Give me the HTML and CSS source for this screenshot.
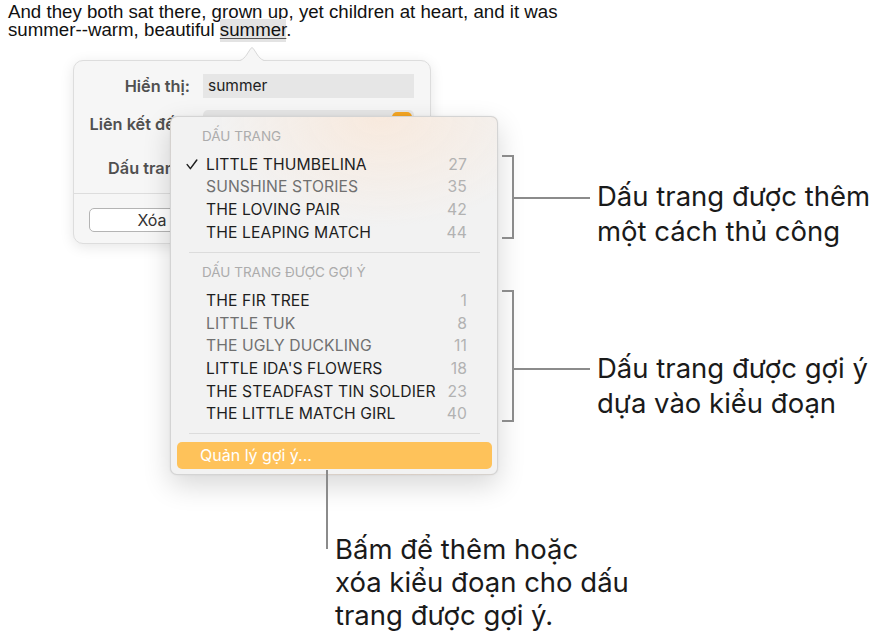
FILE: index.html
```html
<!DOCTYPE html>
<html lang="vi">
<head>
<meta charset="utf-8">
<title>Dấu trang</title>
<link rel="stylesheet" href="styles.css">
</head>
<body>
<div class="stage">
  <div class="doc">
    <div class="line">And they both sat there, grown up, yet children at heart, and it was</div>
    <div class="line"><span>summer--warm, beautiful</span> <span class="hl">summer</span><span>.</span></div>
  </div>

  <div class="popover">
    <svg class="arrow" width="40" height="19" viewBox="0 0 40 19"><path d="M0 18.5 C8 18.5 11 17 14.5 12 L18.6 5.6 Q20 3.6 21.4 5.6 L25.5 12 C29 17 32 18.5 40 18.5" fill="#f6f6f6" stroke="#d8d8d8" stroke-width="1"/><rect x="0" y="18" width="40" height="1.5" fill="#f6f6f6"/></svg>
    <div class="form">
      <div class="row row1"><span class="label">Hiển thị:</span><span class="field">summer</span></div>
      <div class="row row2"><span class="label">Liên kết đến:</span><span class="field popup"><span class="knob"></span></span></div>
      <div class="row row3"><span class="label">Dấu trang:</span><span class="field popup"></span></div>
    </div>
    <div class="sep"></div>
    <div class="foot"><span class="btn">Xóa</span></div>
  </div>

  <div class="menu">
    <div class="menu-head">DẤU TRANG</div>
    <ul class="menu-list">
      <li class="item"><span class="chk"><svg width="12" height="11" viewBox="0 0 12 11"><path d="M1.2 5.6 L4.4 9.6 L10.8 1" fill="none" stroke="#1e1e1e" stroke-width="1.5" stroke-linecap="round" stroke-linejoin="round"/></svg></span><span class="name">LITTLE THUMBELINA</span><span class="num">27</span></li>
      <li class="item dim"><span class="chk"></span><span class="name">SUNSHINE STORIES</span><span class="num">35</span></li>
      <li class="item"><span class="chk"></span><span class="name">THE LOVING PAIR</span><span class="num">42</span></li>
      <li class="item"><span class="chk"></span><span class="name">THE LEAPING MATCH</span><span class="num">44</span></li>
    </ul>
    <div class="menu-sep"></div>
    <div class="menu-head head2">DẤU TRANG ĐƯỢC GỢI Ý</div>
    <ul class="menu-list">
      <li class="item"><span class="chk"></span><span class="name">THE FIR TREE</span><span class="num">1</span></li>
      <li class="item dim"><span class="chk"></span><span class="name">LITTLE TUK</span><span class="num">8</span></li>
      <li class="item dim"><span class="chk"></span><span class="name">THE UGLY DUCKLING</span><span class="num">11</span></li>
      <li class="item"><span class="chk"></span><span class="name">LITTLE IDA'S FLOWERS</span><span class="num">18</span></li>
      <li class="item"><span class="chk"></span><span class="name">THE STEADFAST TIN SOLDIER</span><span class="num">23</span></li>
      <li class="item"><span class="chk"></span><span class="name">THE LITTLE MATCH GIRL</span><span class="num">40</span></li>
    </ul>
    <div class="menu-sep sep2"></div>
    <div class="menu-action">Quản lý gợi ý...</div>
  </div>

  <div class="bracket br1"></div>
  <div class="bracket br2"></div>
  <div class="vline"></div>

  <p class="callout c1">Dấu trang được thêm<br>một cách thủ công</p>
  <p class="callout c2">Dấu trang được gợi ý<br>dựa vào kiểu đoạn</p>
  <p class="callout c3">Bấm để thêm hoặc<br>xóa kiểu đoạn cho dấu<br>trang được gợi ý.</p>
</div>
</body>
</html>
```

FILE: styles.css
```css
html, body {
  margin: 0;
  padding: 0;
  background: #ffffff;
}

.stage {
  position: relative;
  width: 892px;
  height: 643px;
  overflow: hidden;
  font-family: "Inter", "Liberation Sans", sans-serif;
}

.doc {
  padding: 3px 0 0 8px;
  font-family: "Liberation Sans", Arial, sans-serif;
  font-size: 18.7px;
  line-height: 18px;
  color: #111111;
}

.line {
  height: 18px;
  white-space: nowrap;
}

.hl {
  background: #e3e3e3;
  text-decoration: underline;
  text-decoration-color: #555555;
  text-underline-offset: 2px;
  box-shadow: 0 2px 0 #e3e3e3;
}

/* popover */
.popover {
  position: absolute;
  left: 73px;
  top: 60px;
  width: 358px;
  box-sizing: border-box;
  border: 1px solid #dddddd;
  border-radius: 10px;
  background: #f6f6f6;
  box-shadow: 0 3px 14px rgba(0, 0, 0, 0.10);
  padding-top: 13px;
}

.arrow {
  position: absolute;
  left: 158px;
  top: -18px;
  display: block;
}

.form {
  display: flex;
  flex-direction: column;
}

.row {
  display: flex;
  align-items: center;
  column-gap: 13px;
}

.row1 { height: 24px; }
.row2 { height: 28px; margin-top: 12px; }
.row3 { height: 28px; margin-top: 16px; }

.label {
  width: 116px;
  flex: none;
  text-align: right;
  font-size: 16.3px;
  font-weight: 600;
  color: #505050;
  white-space: nowrap;
}

.field {
  width: 211px;
  height: 24px;
  box-sizing: border-box;
  background: #e6e6e6;
  padding-left: 5px;
  font-size: 15.5px;
  line-height: 24px;
  color: #222222;
}

.field.popup {
  height: 28px;
  border-radius: 5px;
  display: flex;
  justify-content: flex-end;
  padding: 2px;
}

.knob {
  width: 20px;
  height: 22px;
  border-radius: 5px;
  background: #f5a623;
}

.sep {
  height: 1px;
  background: #dddddd;
  margin-top: 11px;
}

.foot {
  display: flex;
  padding: 14px 16px 11px 15px;
}

.btn {
  width: 126px;
  height: 24px;
  box-sizing: border-box;
  border: 1px solid #b4b4b4;
  border-radius: 5px;
  background: #ffffff;
  text-align: center;
  font-size: 16px;
  line-height: 22px;
  color: #333333;
}

/* menu */
.menu {
  position: absolute;
  left: 170px;
  top: 116px;
  width: 328px;
  height: 359px;
  box-sizing: border-box;
  border: 1px solid rgba(0, 0, 0, 0.12);
  border-radius: 7px;
  background:
    radial-gradient(ellipse 170px 110px at 210px 0px, rgba(252, 228, 208, 0.6), rgba(252, 228, 208, 0)),
    #f2f2f2;
  box-shadow: 0 10px 28px rgba(0, 0, 0, 0.16), 0 0 2px rgba(0, 0, 0, 0.08);
  padding-top: 9px;
}

.menu-head {
  height: 20px;
  line-height: 20px;
  padding-left: 31px;
  font-size: 13.5px;
  color: #acacac;
}

.menu-head.head2 { margin-top: 9px; }

.menu-list {
  list-style: none;
  margin: 7px 0 0;
  padding: 0;
}

.item {
  display: grid;
  grid-template-columns: 20px 1fr auto;
  align-items: center;
  height: 22.67px;
  padding: 0 30px 0 15px;
  font-size: 15.7px;
  letter-spacing: 0.1px;
  color: #1e1e1e;
}

.item.dim { color: #707070; }

.chk {
  display: flex;
  align-items: center;
}

.chk svg { display: block; }

.num {
  color: #b2b2b2;
  text-align: right;
}

.menu-sep {
  height: 1px;
  background: #dcdcdc;
  margin: 8.5px 17px 0 18px;
}

.menu-sep.sep2 { margin-top: 8px; }

.menu-action {
  height: 27px;
  margin: 8px 5px 0 6px;
  border-radius: 5px;
  background: #fec25a;
  padding-left: 23px;
  line-height: 27px;
  font-size: 16px;
  color: #ffffff;
}

/* annotations */
.bracket {
  position: absolute;
  left: 502px;
  width: 12px;
  box-sizing: border-box;
  border: 2px solid #8b8b8b;
  border-left: none;
}

.bracket::after {
  content: "";
  position: absolute;
  left: 100%;
  width: 78px;
  height: 2px;
  background: #8b8b8b;
}

.br1 { top: 155px; height: 84px; }
.br1::after { top: 40px; }

.br2 { top: 290px; height: 132px; }
.br2::after { top: 76px; }

.vline {
  position: absolute;
  left: 326px;
  top: 470px;
  width: 2px;
  height: 79px;
  background: #8b8b8b;
}

.callout {
  position: absolute;
  margin: 0;
  font-size: 27.5px;
  line-height: 35px;
  color: #1a1a1a;
  white-space: nowrap;
}

.c1 { left: 597px; top: 179px; }
.c2 { left: 597px; top: 351px; }
.c3 { left: 335px; top: 533px; line-height: 33px; }
```
